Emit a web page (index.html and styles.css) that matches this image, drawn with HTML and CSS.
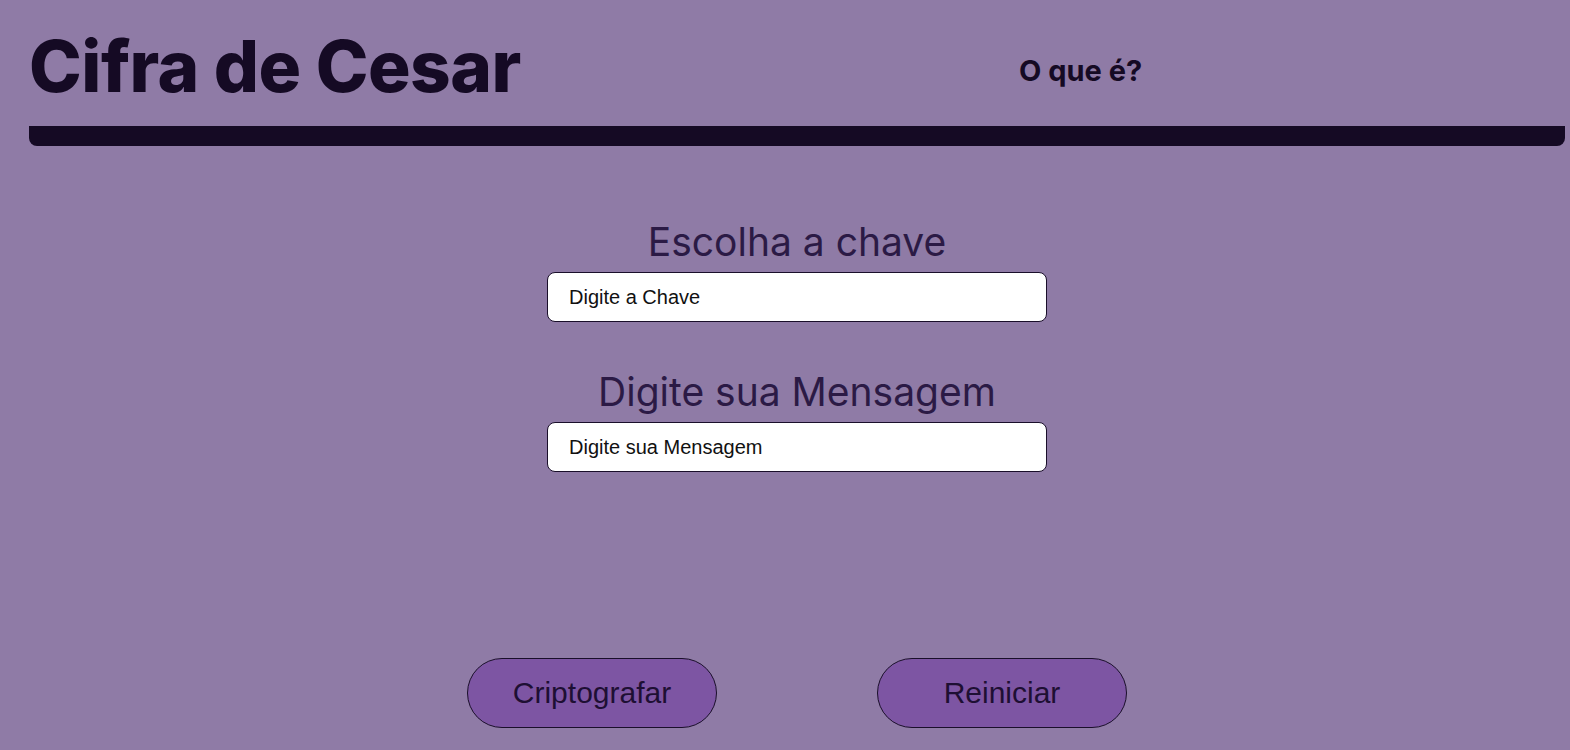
FILE: index.html
```html
<!DOCTYPE html>
<html lang="pt-BR">
<head>
<meta charset="utf-8">
<title>Cifra de Cesar</title>
<link rel="stylesheet" href="styles.css">
</head>
<body>
<div class="page">
  <header class="header">
    <h1 class="title">Cifra de Cesar</h1>
    <nav class="nav"><a class="nav-link" href="#">O que é?</a></nav>
  </header>
  <div class="bar"></div>
  <main class="main">
    <div class="field">
      <label class="label" for="chave">Escolha a chave</label>
      <input class="input" id="chave" type="text" placeholder="Digite a Chave">
    </div>
    <div class="field">
      <label class="label" for="msg">Digite sua Mensagem</label>
      <input class="input" id="msg" type="text" placeholder="Digite sua Mensagem">
    </div>
  </main>
  <div class="actions">
    <button class="btn" type="button">Criptografar</button>
    <button class="btn" type="button">Reiniciar</button>
  </div>
</div>
</body>
</html>
```

FILE: styles.css
```css
html, body {
  margin: 0;
  padding: 0;
  background: #8f7ba6;
}
body {
  font-family: "Inter", "Open Sans", sans-serif;
}
.page {
  padding: 0 5px 0 29px;
  height: 750px;
  box-sizing: border-box;
  display: flex;
  flex-direction: column;
}
.header {
  display: flex;
  align-items: center;
  height: 126px;
  box-sizing: border-box;
  padding-top: 6px;
}
.title {
  margin: 0;
  width: 990px;
  font-size: 71px;
  font-weight: 800;
  color: #150a24;
  letter-spacing: -0.5px;
}
.nav-link {
  font-size: 29px;
  font-weight: 700;
  color: #150a24;
  text-decoration: none;
  position: relative;
  top: 4px;
}
.bar {
  height: 20px;
  background: #150a24;
  border-radius: 0 0 8px 8px;
}
.main {
  display: flex;
  flex-direction: column;
  align-items: center;
  gap: 50px;
  padding-top: 76px;
}
.field {
  display: flex;
  flex-direction: column;
  align-items: center;
}
.label {
  font-size: 39px;
  font-weight: 400;
  color: #2b1a45;
  line-height: 46px;
  margin-bottom: 4px;
  position: relative;
  top: -3px;
}
.input {
  width: 500px;
  height: 50px;
  box-sizing: border-box;
  border: 1px solid #1a0f2a;
  border-radius: 8px;
  background: #fff;
  padding: 0 21px;
  font-family: "Liberation Sans", Arial, sans-serif;
  font-size: 20px;
  outline: none;
}
.input::placeholder {
  color: #111;
  opacity: 1;
}
.actions {
  margin-top: auto;
  margin-bottom: 22px;
  display: flex;
  justify-content: center;
  gap: 160px;
}
.btn {
  width: 250px;
  height: 70px;
  border-radius: 35px;
  border: 1px solid #1a0f2a;
  background: #7d55a3;
  color: #1e0f33;
  font-family: "Liberation Sans", Arial, sans-serif;
  font-size: 30px;
  cursor: pointer;
}
```
